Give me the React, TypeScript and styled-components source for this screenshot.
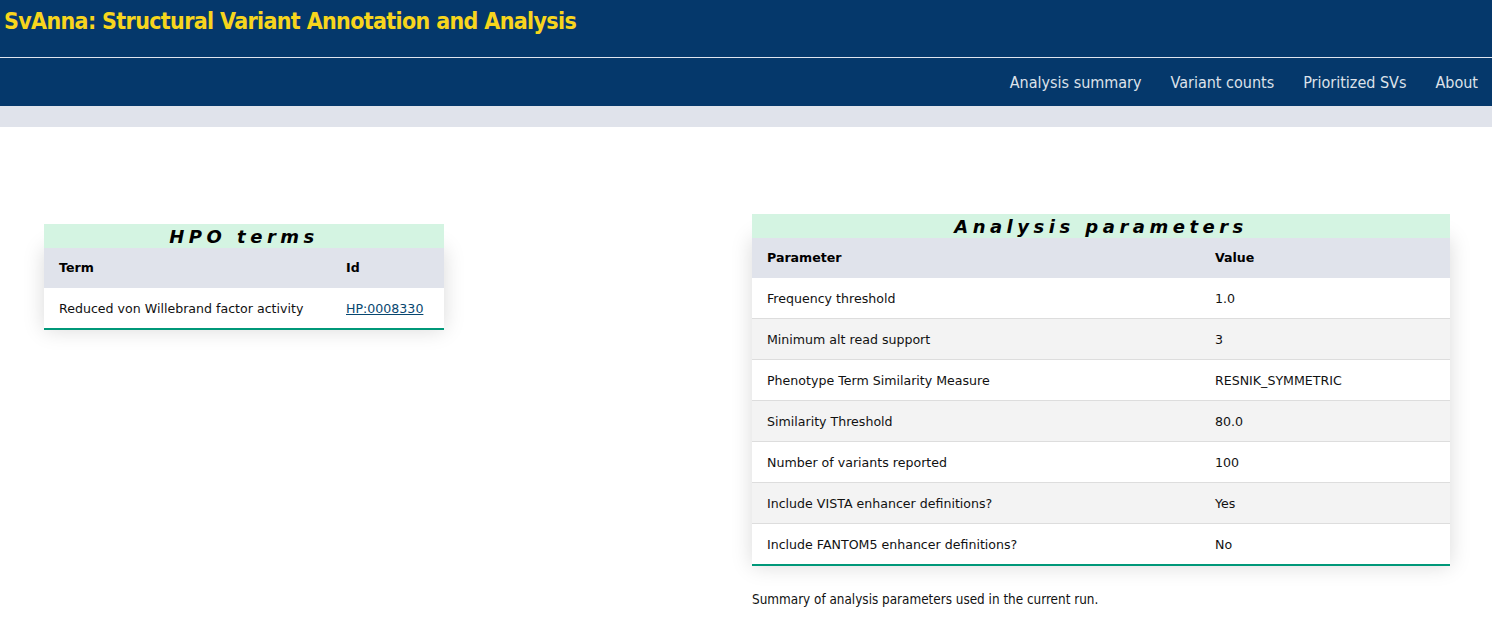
import React from "react";
import styled, { createGlobalStyle } from "styled-components";

const Global = createGlobalStyle`
  html, body { margin: 0; padding: 0; background: #ffffff; }
  body { font-family: "DejaVu Sans", Verdana, sans-serif; }
`;

const Header = styled.header`
  background: #05386b;
`;

const TitleBar = styled.div`
  height: 58px;
  display: flex;
  align-items: flex-start;
  padding: 6px 0 0 4px;
  box-sizing: border-box;
  border-bottom: 1px solid #dfe4ee;
`;

const Title = styled.h1`
  margin: 0;
  font-family: "DejaVu Sans Condensed", "Liberation Sans Narrow", Roboto, sans-serif;
  font-weight: bold;
  font-size: 23px;
  letter-spacing: -0.65px;
  line-height: 30px;
  color: #f7d51d;
`;

const Nav = styled.nav`
  height: 48px;
  display: flex;
  justify-content: flex-end;
  align-items: center;
  gap: 29px;
  padding-right: 14px;
`;

const NavLink = styled.a`
  font-family: "DejaVu Sans Condensed", "Liberation Sans Narrow", Roboto, sans-serif;
  font-size: 16px;
  color: #dde2ea;
  text-decoration: none;
`;

const Band = styled.div`
  height: 21px;
  background: #e0e3eb;
`;

const Main = styled.main`
  display: grid;
  grid-template-columns: 708px 698px;
  padding: 0 0 0 44px;
`;

const Column = styled.section<{ $top: number }>`
  padding-top: ${(p) => p.$top}px;
`;

const Table = styled.table<{ $w: number }>`
  width: ${(p) => p.$w}px;
  border-collapse: collapse;
  font-size: 12.6px;
  line-height: 16px;
  box-shadow: 0 0 20px rgba(0, 0, 0, 0.15);
`;

const Caption = styled.caption`
  background: #d4f4e2;
  font-weight: bold;
  font-style: italic;
  font-size: 18px;
  letter-spacing: 0.25em;
  line-height: 25px;
  height: 24px;
  overflow: hidden;
  text-align: center;
`;

const Th = styled.th<{ $w?: number }>`
  background: #e0e3eb;
  text-align: left;
  padding: 12px 15px;
  font-weight: bold;
  color: #000;
  ${(p) => (p.$w ? `width: ${p.$w}px;` : "")}
`;

const Row = styled.tr<{ $alt?: boolean; $last?: boolean }>`
  background: ${(p) => (p.$alt ? "#f3f3f3" : "#ffffff")};
  border-bottom: ${(p) => (p.$last ? "2px solid #009879" : "1px solid #dddddd")};
`;

const Td = styled.td`
  padding: 13px 15px 11px;
  color: #111;
`;

const IdLink = styled.a`
  color: #08476f;
  text-decoration: underline;
`;

const Note = styled.p`
  margin: 26px 0 0;
  font-family: "DejaVu Sans Condensed", "Liberation Sans Narrow", Roboto, sans-serif;
  font-size: 13.4px;
  color: #111;
`;

const params: [string, string][] = [
  ["Frequency threshold", "1.0"],
  ["Minimum alt read support", "3"],
  ["Phenotype Term Similarity Measure", "RESNIK_SYMMETRIC"],
  ["Similarity Threshold", "80.0"],
  ["Number of variants reported", "100"],
  ["Include VISTA enhancer definitions?", "Yes"],
  ["Include FANTOM5 enhancer definitions?", "No"],
];

export default function App() {
  return (
    <>
      <Global />
      <Header>
        <TitleBar>
          <Title>SvAnna: Structural Variant Annotation and Analysis</Title>
        </TitleBar>
        <Nav>
          <NavLink href="#">Analysis summary</NavLink>
          <NavLink href="#">Variant counts</NavLink>
          <NavLink href="#">Prioritized SVs</NavLink>
          <NavLink href="#">About</NavLink>
        </Nav>
      </Header>
      <Band />
      <Main>
        <Column $top={97}>
          <Table $w={400}>
            <Caption>HPO terms</Caption>
            <thead>
              <tr>
                <Th $w={257}>Term</Th>
                <Th>Id</Th>
              </tr>
            </thead>
            <tbody>
              <Row $last>
                <Td>Reduced von Willebrand factor activity</Td>
                <Td>
                  <IdLink href="#">HP:0008330</IdLink>
                </Td>
              </Row>
            </tbody>
          </Table>
        </Column>
        <Column $top={87}>
          <Table $w={698}>
            <Caption>Analysis parameters</Caption>
            <thead>
              <tr>
                <Th $w={418}>Parameter</Th>
                <Th>Value</Th>
              </tr>
            </thead>
            <tbody>
              {params.map(([k, v], i) => (
                <Row key={k} $alt={i % 2 === 1} $last={i === params.length - 1}>
                  <Td>{k}</Td>
                  <Td>{v}</Td>
                </Row>
              ))}
            </tbody>
          </Table>
          <Note>Summary of analysis parameters used in the current run.</Note>
        </Column>
      </Main>
    </>
  );
}
